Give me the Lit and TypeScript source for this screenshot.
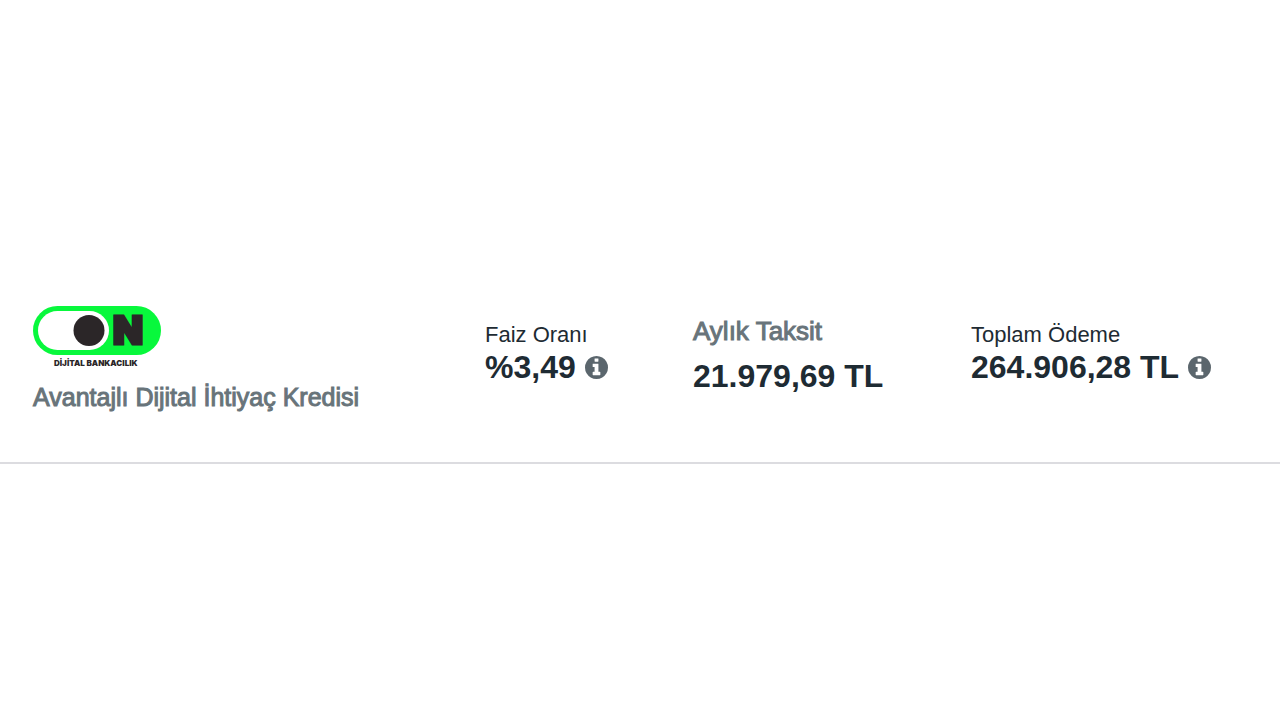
import { LitElement, html, css, svg } from "lit";
import { customElement } from "lit/decorators.js";

const infoIcon = svg`<svg viewBox="128 128 1536 1536" width="23" height="23" aria-hidden="true">
  <path fill="#5b666d" d="M1152 1376v-160q0-14-9-23t-23-9h-96v-512q0-14-9-23t-23-9h-320q-14 0-23 9t-9 23v160q0 14 9 23t23 9h96v320h-96q-14 0-23 9t-9 23v160q0 14 9 23t23 9h448q14 0 23-9t9-23zm-128-896v-160q0-14-9-23t-23-9h-192q-14 0-23 9t-9 23v160q0 14 9 23t23 9h192q14 0 23-9t9-23zm640 416q0 209-103 385.500t-279.500 279.500-385.500 103-385.500-103-279.500-279.500-103-385.500 103-385.500 279.500-279.500 385.500-103 385.500 103 279.500 279.500 103 385.500z"/>
</svg>`;

@customElement("app-root")
export class AppRoot extends LitElement {
  static styles = css`
    :host {
      display: block;
      min-height: 100vh;
      box-sizing: border-box;
      padding-top: 306px;
      background: #fff;
      color: #1e2b33;
      font-family: "Liberation Sans", Arial, sans-serif;
    }
    .offer {
      display: grid;
      grid-template-columns: 452fr 208fr 278fr 277fr;
      align-items: start;
      padding: 0 32px 51px 33px;
      border-bottom: 2px solid #dcdce0;
    }
    .bank {
      display: flex;
      flex-direction: column;
      align-items: flex-start;
    }
    .logo {
      display: block;
    }
    .name {
      margin: 16px 0 0;
      font-size: 25px;
      line-height: 28px;
      font-weight: 400;
      color: #68747a;
      -webkit-text-stroke: 1px #68747a;
      white-space: nowrap;
    }
    dl {
      display: contents;
    }
    dt,
    dd {
      margin: 0;
      white-space: nowrap;
    }
    .item {
      padding-top: 16px;
    }
    .item dt {
      font-size: 22px;
      line-height: 26px;
    }
    .item dd,
    .main dd {
      display: flex;
      align-items: center;
      gap: 9px;
      font-size: 32px;
      line-height: 38px;
      font-weight: 700;
    }
    .main {
      padding-top: 11px;
    }
    .main dt {
      margin-bottom: 12px;
      font-size: 26px;
      line-height: 28px;
      color: #68747a;
      -webkit-text-stroke: 1px #68747a;
    }
    .info {
      display: flex;
      padding: 0;
      border: 0;
      background: none;
      cursor: pointer;
    }
  `;

  private info(label: string) {
    return html`<button class="info" type="button" aria-label=${label}>${infoIcon}</button>`;
  }

  render() {
    return html`
      <section class="offer">
        <div class="bank">
          <svg class="logo" viewBox="0 0 128 61" width="128" height="61" role="img" aria-label="ON Dijital Bankacılık">
            <rect x="0" y="0" width="128" height="49" rx="24.5" fill="#08f83c"/>
            <rect x="5" y="5" width="71" height="39" rx="19.5" fill="#fff"/>
            <circle cx="56" cy="24.5" r="15.5" fill="#2b2628"/>
            <text x="80" y="38" font-family="Inter" font-weight="900" font-size="39" fill="#2b2628" stroke="#2b2628" stroke-width="3">N</text>
            <text x="21" y="60" font-family="Inter" font-weight="900" font-size="8" fill="#2b2628">DİJİTAL BANKACILIK</text>
          </svg>
          <h2 class="name">Avantajlı Dijital İhtiyaç Kredisi</h2>
        </div>
        <dl>
          <div class="item">
            <dt>Faiz Oranı</dt>
            <dd>%3,49 ${this.info("Faiz oranı bilgisi")}</dd>
          </div>
          <div class="main">
            <dt>Aylık Taksit</dt>
            <dd>21.979,69 TL</dd>
          </div>
          <div class="item">
            <dt>Toplam Ödeme</dt>
            <dd>264.906,28 TL ${this.info("Toplam ödeme bilgisi")}</dd>
          </div>
        </dl>
      </section>
    `;
  }
}
